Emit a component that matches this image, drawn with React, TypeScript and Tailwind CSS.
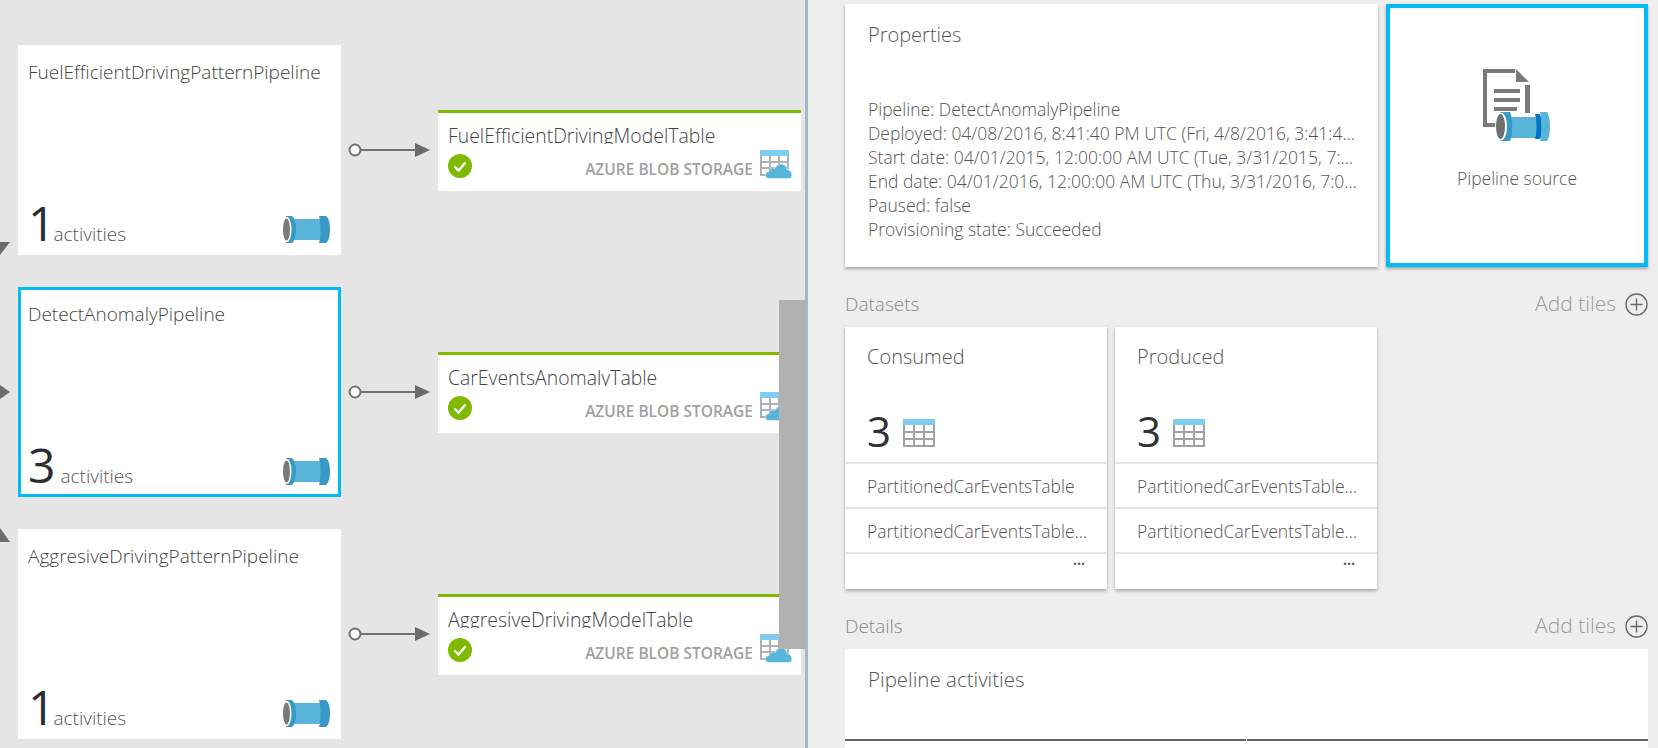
const PIPELINES = [
  { name: 'FuelEfficientDrivingPatternPipeline', count: 1, table: 'FuelEfficientDrivingModelTable', selected: false },
  { name: 'DetectAnomalyPipeline', count: 3, table: 'CarEventsAnomalyTable', selected: true },
  { name: 'AggresiveDrivingPatternPipeline', count: 1, table: 'AggresiveDrivingModelTable', selected: false }
];

const PROPERTIES = [
  'Pipeline: DetectAnomalyPipeline',
  'Deployed: 04/08/2016, 8:41:40 PM UTC (Fri, 4/8/2016, 3:41:4…',
  'Start date: 04/01/2015, 12:00:00 AM UTC (Tue, 3/31/2015, 7:…',
  'End date: 04/01/2016, 12:00:00 AM UTC (Thu, 3/31/2016, 7:0…',
  'Paused: false',
  'Provisioning state: Succeeded'
];

function PipeIcon() {
  return (
    <svg width="49" height="27" viewBox="0 0 49 27">
      <rect x="8" y="3" width="34" height="21" fill="#59b4d9" />
      <path d="M4 0 L10 0 C13 3 14 8 14 13.5 C14 19 13 24 10 27 L4 27 Z" fill="#3999c6" />
      <path d="M37 0 L44 0 C47 2 48 8 48 13.5 C48 19 47 25 44 27 L37 27 C39 20 39 7 37 0 Z" fill="#3999c6" />
      <ellipse cx="5" cy="13.5" rx="4.5" ry="12.5" fill="#ffffff" />
      <ellipse cx="4.5" cy="13.5" rx="3.5" ry="11" fill="#7a7a7a" />
    </svg>
  );
}

function TableCloudIcon() {
  return (
    <svg width="33" height="29" viewBox="0 0 33 29">
      <rect x="0" y="0" width="29" height="6" fill="#7fcdee" />
      <path d="M1 6 V25 H28 V6 M1 12 H28 M1 18 H28 M10 6 V25 M19 6 V25" fill="none" stroke="#b0b1b2" strokeWidth="2" />
      <path d="M9 28.5 C4 28.5 4 22 9 21.5 C10 18 13 17.5 15 18.5 C17 12 27 13 27 19.5 C32 19.5 34 28.5 29 28.5 Z" fill="#59b4d9" stroke="#ffffff" strokeWidth="0.5" />
    </svg>
  );
}

function TableIcon() {
  return (
    <svg width="32" height="28" viewBox="0 0 32 28">
      <rect x="0" y="0" width="32" height="6" fill="#7fcdee" />
      <path d="M1 6 V27 H31 V6 M1 13 H31 M1 20 H31 M11 6 V27 M21 6 V27" fill="none" stroke="#a0a1a2" strokeWidth="2" />
    </svg>
  );
}

function SourceIcon() {
  return (
    <svg width="70" height="74" viewBox="0 0 70 74">
      <path d="M6 1 H33 V5 H5 V55 H16 V59 H1 V1 Z" fill="#7a7a7a" />
      <path d="M34 1 L47 14 H34 Z" fill="#7a7a7a" />
      <rect x="43" y="17" width="5" height="28" fill="#7a7a7a" />
      <rect x="12" y="21" width="26" height="4" fill="#7a7a7a" />
      <rect x="12" y="30" width="26" height="4" fill="#7a7a7a" />
      <rect x="12" y="39" width="23" height="4" fill="#7a7a7a" />
      <rect x="22" y="49" width="40" height="21" fill="#59b4d9" />
      <path d="M18 44 H28 C31 50 31 68 28 73 H18 Z" fill="#3999c6" />
      <path d="M53 46 H58 C60 52 60 66 58 71 H53 C55 65 55 52 53 46 Z" fill="#0072c6" />
      <path d="M58 44 H65 C69 50 69 68 65 73 H58 C60 66 60 50 58 44 Z" fill="#59b4d9" />
      <ellipse cx="19" cy="58.5" rx="6" ry="14" fill="#ffffff" />
      <ellipse cx="18.5" cy="58.5" rx="4.5" ry="12.5" fill="#6f6f6f" />
    </svg>
  );
}

function Connector() {
  return (
    <svg width="97" height="20" viewBox="0 0 97 20" className="shrink-0">
      <circle cx="14" cy="10" r="5.5" fill="#ffffff" stroke="#717171" strokeWidth="2" />
      <path d="M20 10 H75" stroke="#717171" strokeWidth="2" />
      <path d="M74 3 L89 10 L74 17 Z" fill="#6b6b6b" />
    </svg>
  );
}

function AddTiles() {
  return (
    <div className="flex items-center gap-[9px] text-[#9a9a9a]">
      <span className="text-[21px] font-light">Add tiles</span>
      <svg width="23" height="23" viewBox="0 0 23 23">
        <circle cx="11.5" cy="11.5" r="10.5" fill="none" stroke="#666666" strokeWidth="1.3" />
        <path d="M11.5 5.5 V17.5 M5.5 11.5 H17.5" stroke="#666666" strokeWidth="1.3" />
      </svg>
    </div>
  );
}

function DatasetTile({ title, rows }: { title: string; rows: string[] }) {
  return (
    <div className="flex h-[262px] w-[262px] flex-col bg-white shadow-[0_2px_3px_rgba(0,0,0,0.3)]">
      <div className="h-[135px] px-[22px] pt-[15px]">
        <div className="text-[20px] font-light leading-[30px] text-[#555]">{title}</div>
        <div className="mt-[36px] flex items-start gap-[12px]">
          <span className="text-[42px] leading-[46px] text-[#2f3338]">3</span>
          <div className="mt-[11px]">
            <TableIcon />
          </div>
        </div>
      </div>
      {rows.map((row, i) => (
        <div key={i} className="flex h-[45px] items-center whitespace-nowrap border-t-2 border-[#e5e5e5] px-[22px] pt-[1px] text-[17.5px] font-light text-[#555]">
          {row}
        </div>
      ))}
      <div className="flex flex-1 justify-end border-t-2 border-[#e5e5e5] pr-[22px] text-[#555]">
        <span className="text-[14px] font-bold leading-[20px]">···</span>
      </div>
    </div>
  );
}

export default function App() {
  return (
    <div className="flex h-screen w-screen overflow-hidden bg-[#eeeeee] font-['Open_Sans','Noto_Sans',sans-serif]">
      <div className="relative flex w-[805px] shrink-0 flex-col gap-[32px] overflow-hidden bg-[#e5e5e5] pl-[18px] pt-[45px]">
        {PIPELINES.map((p) => (
          <div key={p.name} className="flex items-center">
            <div className={`flex h-[210px] w-[323px] shrink-0 flex-col justify-between bg-white ${p.selected ? 'border-[3px] border-[#00bcf2] px-[7px] pb-[3px] pt-[10px]' : 'px-[10px] pb-[6px] pt-[13px]'}`}>
              <div className="text-[19px] font-light leading-[28px] text-[#444]">{p.name}</div>
              <div className="flex items-end justify-between">
                <div className={`flex items-end ${p.count === 1 ? '-space-x-[2px]' : 'gap-[5px]'}`}>
                  <span className="text-[48px] leading-[52px] text-[#2a2e33]">{p.count}</span>
                  <span className="text-[19px] font-light leading-[30px] text-[#555]">activities</span>
                </div>
                <div className="mb-[6px]">
                  <PipeIcon />
                </div>
              </div>
            </div>
            <Connector />
            <div className="flex h-[81px] w-[363px] shrink-0 flex-col border-t-[3px] border-[#7fba00] bg-white px-[10px]">
              <div className="h-[31px] overflow-hidden text-[19.4px] font-light leading-[46px] text-[#444]">{p.table}</div>
              <div className="mt-[10px] flex items-start justify-between">
                <svg width="24" height="24" viewBox="0 0 24 24">
                  <circle cx="12" cy="12" r="12" fill="#7fba00" />
                  <path d="M6.5 12.5 L10.5 16.5 L17.5 8.5" fill="none" stroke="#ffffff" strokeWidth="2.4" />
                </svg>
                <div className="-mt-[4px] -mr-[2px] flex items-start gap-[7px]">
                  <span className="mt-[9px] text-[15.5px] font-semibold leading-[20px] text-[#a0a0a0]">AZURE BLOB STORAGE</span>
                  <TableCloudIcon />
                </div>
              </div>
            </div>
          </div>
        ))}
        <div className="absolute left-0 top-[242px] h-0 w-0 border-r-[10px] border-t-[13px] border-r-transparent border-t-[#6b6b6b]" />
        <div className="absolute left-0 top-[385px] h-0 w-0 border-y-[7px] border-l-[10px] border-y-transparent border-l-[#6b6b6b]" />
        <div className="absolute left-0 top-[528px] h-0 w-0 border-b-[14px] border-r-[10px] border-b-[#6b6b6b] border-r-transparent" />
        <div className="absolute right-0 top-[300px] h-[349px] w-[26px] bg-[#b1b1b1]" />
      </div>

      <div className="w-[3px] shrink-0 bg-[#aab6c5]" />

      <div className="flex min-w-0 flex-1 flex-col pl-[37px] pr-[10px] pt-[4px]">
        <div className="flex gap-[8px]">
          <div className="h-[263px] w-[533px] shrink-0 bg-white px-[23px] pt-[15px] shadow-[0_2px_3px_rgba(0,0,0,0.3)]">
            <div className="text-[20px] font-light leading-[32px] text-[#555]">Properties</div>
            <div className="mt-[46px]">
              {PROPERTIES.map((line) => (
                <div key={line} className="whitespace-nowrap text-[17.5px] font-light leading-[24px] text-[#555]">{line}</div>
              ))}
            </div>
          </div>
          <div className="flex h-[263px] flex-1 flex-col items-center border-4 border-[#00bcf2] bg-white pt-[60px] shadow-[0_2px_3px_rgba(0,0,0,0.3)]">
            <SourceIcon />
            <div className="mt-[23px] text-[17.5px] font-light text-[#555]">Pipeline source</div>
          </div>
        </div>

        <div className="mt-[22px] flex h-[30px] items-center justify-between">
          <span className="text-[19px] font-light text-[#888]">Datasets</span>
          <AddTiles />
        </div>
        <div className="mt-[8px] flex gap-[8px]">
          <DatasetTile title="Consumed" rows={['PartitionedCarEventsTable', 'PartitionedCarEventsTable…']} />
          <DatasetTile title="Produced" rows={['PartitionedCarEventsTable…', 'PartitionedCarEventsTable…']} />
        </div>

        <div className="mt-[22px] flex h-[30px] items-center justify-between">
          <span className="text-[19px] font-light text-[#888]">Details</span>
          <AddTiles />
        </div>
        <div className="mt-[8px] h-[200px] bg-white px-[23px] pt-[15px]">
          <div className="text-[20.5px] font-light leading-[30px] text-[#555]">Pipeline activities</div>
          <div className="-mx-[23px] mt-[45px] flex gap-px">
            <div className="h-[2px] flex-1 bg-[#666666]" />
            <div className="h-[2px] flex-1 bg-[#666666]" />
          </div>
        </div>
      </div>
    </div>
  );
}
